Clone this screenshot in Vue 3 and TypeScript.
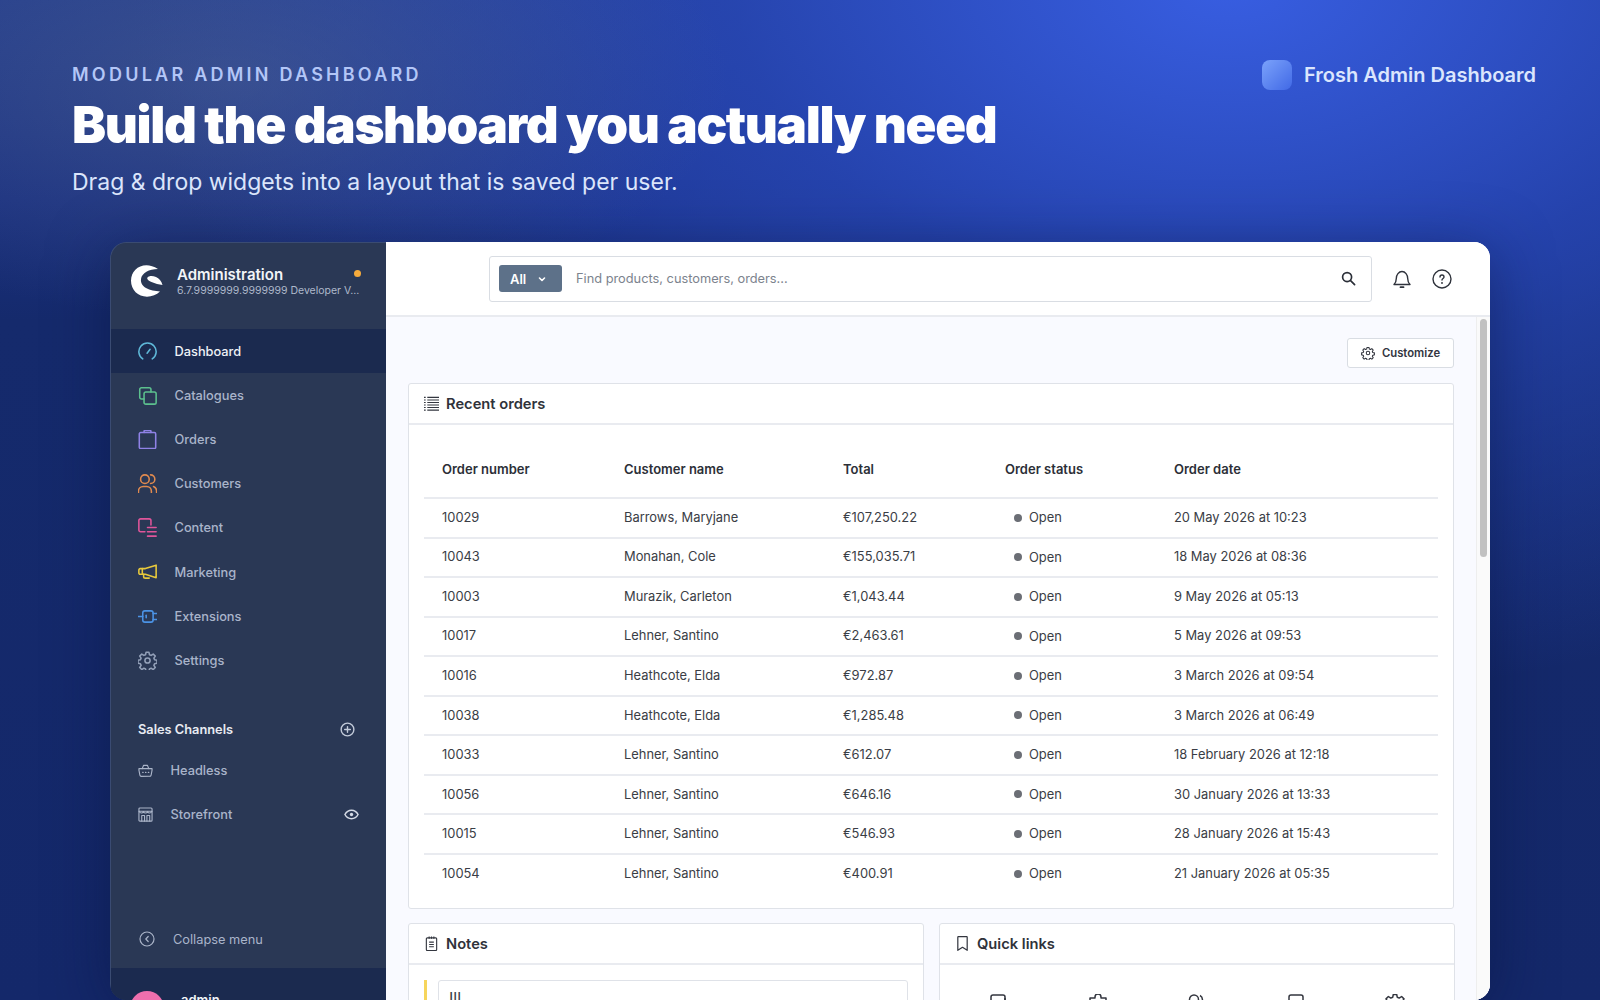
<script setup lang="ts">
interface NavItem {
  label: string;
  color: string;
  paths: string[];
}
interface Order {
  number: string;
  customer: string;
  total: string;
  date: string;
}

const gear =
  "M10.3 2.5h3.400l.6 2.800 1.900.8 2.400-1.600 2.400 2.400-1.600 2.400.8 1.900 2.800.6v3.400l-2.800.6-.8 1.900 1.600 2.400-2.400 2.400-2.400-1.600-1.900.8-.6 2.800h-3.400l-.6-2.800-1.900-.8-2.400 1.600-2.400-2.400 1.600-2.400-.8-1.900-2.800-.6v-3.400l2.800-.6.8-1.900-1.600-2.400 2.400-2.400 2.400 1.600 1.900-.8z";

const navItems: NavItem[] = [
  { label: "Dashboard", color: "#5fb8d8", paths: ["M6.500 20.500a10 10 0 1 1 11 0", "M11.500 14l3.500-4.500"] },
  { label: "Catalogues", color: "#5cc08e", paths: ["M8 16H5a2 2 0 0 1-2-2V5a2 2 0 0 1 2-2h9a2 2 0 0 1 2 2v3", "M10 8h10a2 2 0 0 1 2 2v10a2 2 0 0 1-2 2H10a2 2 0 0 1-2-2V10a2 2 0 0 1 2-2z"] },
  { label: "Orders", color: "#8f82e6", paths: ["M4 4h16a1.500 1.500 0 0 1 1.500 1.500V21a1.500 1.500 0 0 1-1.500 1.500H4A1.500 1.500 0 0 1 2.500 21V5.500A1.500 1.500 0 0 1 4 4z", "M8 4V2.800a1.300 1.300 0 0 1 1.300-1.300h5.400A1.300 1.300 0 0 1 16 2.800V4"] },
  { label: "Customers", color: "#e08a4f", paths: ["M9 12a5 5 0 1 0 0-10 5 5 0 0 0 0 10z", "M1.500 22.500V21a5.500 5.500 0 0 1 5.500-5.500h4a5.500 5.500 0 0 1 5.500 5.500v1.500", "M15.500 2a5 5 0 0 1 0 10", "M19 15.500a5.500 5.500 0 0 1 3.500 5.500v1.500"] },
  { label: "Content", color: "#e0559a", paths: ["M9 17H4a2 2 0 0 1-2-2V4a2 2 0 0 1 2-2h10a2 2 0 0 1 2 2v5", "M12 12h10", "M12 17h10", "M12 22h10"] },
  { label: "Marketing", color: "#e8c93c", paths: ["M22 3.500v14.500L9.500 14H3.500a1.500 1.500 0 0 1-1.500-1.500V9a1.500 1.500 0 0 1 1.500-1.500h6z", "M7.500 14v2.500a2 2 0 0 0 2 2H14", "M6 7.500v6"] },
  { label: "Extensions", color: "#4b93e6", paths: ["M9 5.500h7a2.500 2.500 0 0 1 2.500 2.500v8a2.500 2.500 0 0 1-2.500 2.500H9A2.500 2.500 0 0 1 6.500 16V8A2.500 2.500 0 0 1 9 5.500z", "M1 12h5.500", "M18.500 8.500H23", "M18.500 15.500H23", "M10.500 10.500v3"] },
  { label: "Settings", color: "#93a0b8", paths: ["M12 15a3 3 0 1 0 0-6 3 3 0 0 0 0 6z", gear] },
];

const orders: Order[] = [
  { number: "10029", customer: "Barrows, Maryjane", total: "€107,250.22", date: "20 May 2026 at 10:23" },
  { number: "10043", customer: "Monahan, Cole", total: "€155,035.71", date: "18 May 2026 at 08:36" },
  { number: "10003", customer: "Murazik, Carleton", total: "€1,043.44", date: "9 May 2026 at 05:13" },
  { number: "10017", customer: "Lehner, Santino", total: "€2,463.61", date: "5 May 2026 at 09:53" },
  { number: "10016", customer: "Heathcote, Elda", total: "€972.87", date: "3 March 2026 at 09:54" },
  { number: "10038", customer: "Heathcote, Elda", total: "€1,285.48", date: "3 March 2026 at 06:49" },
  { number: "10033", customer: "Lehner, Santino", total: "€612.07", date: "18 February 2026 at 12:18" },
  { number: "10056", customer: "Lehner, Santino", total: "€646.16", date: "30 January 2026 at 13:33" },
  { number: "10015", customer: "Lehner, Santino", total: "€546.93", date: "28 January 2026 at 15:43" },
  { number: "10054", customer: "Lehner, Santino", total: "€400.91", date: "21 January 2026 at 05:35" },
];

const quickLinks: string[][] = [
  ["M15 21H6a2 2 0 0 1-2-2V5a2 2 0 0 1 2-2h10a2 2 0 0 1 2 2v3", "M18 6v6", "M15 9h7"],
  ["M9 6V5a3 3 0 0 1 6 0v1h5v14H4V6z"],
  ["M9 12a4.500 4.500 0 1 0 0-9 4.500 4.500 0 0 0 0 9z", "M2 21a7 7 0 0 1 14 0", "M15 3.500a4.500 4.500 0 0 1 0 8"],
  ["M7 3h10a2 2 0 0 1 2 2v14a2 2 0 0 1-2 2H7a2 2 0 0 1-2-2V5a2 2 0 0 1 2-2z"],
  [gear],
];
</script>

<template>
  <div class="page">
    <header class="hero">
      <div class="hero-text">
        <div class="eyebrow">MODULAR ADMIN DASHBOARD</div>
        <h1 class="headline">Build the dashboard you actually need</h1>
        <p class="sub">Drag &amp; drop widgets into a layout that is saved per user.</p>
      </div>
      <div class="brand">
        <span class="brand-mark"></span>
        <span class="brand-name">Frosh Admin Dashboard</span>
      </div>
    </header>

    <div class="window">
      <aside class="sidebar">
        <div class="side-head">
          <svg class="logo" viewBox="0 0 32 32">
            <path fill="#fff" d="M27 4C23 1.500 19 .3 15.500.3 6.500.3 0 7 0 15.800 0 25 7 31.700 16 31.700c5 0 9.500-2 13-5.200-5-.5-10-1-14-3.500-3.500-2-5.500-5-5-9C10.800 8 18 4 27 4z" />
            <path fill="#fff" d="M16.500 12.500c1.500-2 5-2 8.500-.5 3 1.300 5.500 4 6.500 8-3.500-.5-7.500-1.500-11-3-3-1.200-5-3-4-4.500z" />
          </svg>
          <div class="side-title">
            <div class="admin">Administration</div>
            <div class="version">6.7.9999999.9999999 Developer V...</div>
          </div>
          <span class="status-dot"></span>
        </div>

        <nav class="nav">
          <a v-for="(item, i) in navItems" :key="item.label" class="nav-item" :class="{ active: i === 0 }">
            <svg class="nav-icon" viewBox="1 1 22 22" fill="none" :stroke="item.color" stroke-width="1.800" stroke-linecap="round" stroke-linejoin="round">
              <path v-for="d in item.paths" :key="d" :d="d" />
            </svg>
            <span>{{ item.label }}</span>
          </a>
        </nav>

        <div class="channels-head">
          <span>Sales Channels</span>
          <svg class="plus" viewBox="0 0 16 16" fill="none" stroke="#c3cbda" stroke-width="1.500" stroke-linecap="round">
            <circle cx="8" cy="8" r="6.800" />
            <path d="M8 5v6M5 8h6" />
          </svg>
        </div>
        <a class="channel">
          <svg class="channel-icon" viewBox="0 0 16 16" fill="none" stroke="#aab4c8" stroke-width="1.200" stroke-linecap="round" stroke-linejoin="round">
            <path d="M1 6h14v1.500l-1 5.500a1.500 1.500 0 0 1-1.500 1.200h-9A1.500 1.500 0 0 1 2 13L1 7.500z" />
            <path d="M4.500 6l1.500-3.500h4L11.500 6M5 10h.5M8 10h.5M11 10h.5" />
          </svg>
          <span>Headless</span>
        </a>
        <a class="channel">
          <svg class="channel-icon" viewBox="0 0 16 16" fill="none" stroke="#aab4c8" stroke-width="1.200" stroke-linecap="round" stroke-linejoin="round">
            <path d="M2 1h12a1 1 0 0 1 1 1v12a1 1 0 0 1-1 1H2a1 1 0 0 1-1-1V2a1 1 0 0 1 1-1z" />
            <path d="M1 4.500h14M1.500 5c.5 1.800 3.500 1.800 4.300 0 .8 1.800 3.600 1.800 4.400 0 .8 1.800 3.800 1.800 4.300 0M4 15V9h3v6M9.500 15V9h3v6" />
          </svg>
          <span>Storefront</span>
          <svg class="eye" viewBox="0 0 16 16" fill="none" stroke="#d5dbe6" stroke-width="1.600">
            <path d="M1 8c1.600-3 4-4.500 7-4.500S13.400 5 15 8c-1.600 3-4 4.500-7 4.500S2.600 11 1 8z" />
            <circle cx="8" cy="8" r="1.800" fill="#d5dbe6" stroke="none" />
          </svg>
        </a>

        <div class="side-foot">
          <a class="collapse">
            <svg class="collapse-icon" viewBox="0 0 16 16" fill="none" stroke="#aab4c8" stroke-width="1.200" stroke-linecap="round" stroke-linejoin="round">
              <circle cx="8" cy="8" r="7" />
              <path d="M9.200 5.500 6.800 8l2.400 2.500" />
            </svg>
            <span>Collapse menu</span>
          </a>
          <div class="user">
            <span class="avatar"></span>
            <span class="user-name">admin</span>
          </div>
        </div>
      </aside>

      <main class="main">
        <div class="topbar">
          <div class="search">
            <span class="scope">All
              <svg viewBox="0 0 10 10" fill="none" stroke="#fff" stroke-width="1.600" stroke-linecap="round" stroke-linejoin="round">
                <path d="M2.500 4l2.500 2.500L7.500 4" />
              </svg>
            </span>
            <span class="placeholder">Find products, customers, orders...</span>
            <svg class="search-icon" viewBox="0 0 16 16" fill="none" stroke="#2b2f38" stroke-width="1.800" stroke-linecap="round">
              <circle cx="6.500" cy="6.500" r="4.800" />
              <path d="M10.200 10.200 14.500 14.500" />
            </svg>
          </div>
          <svg class="bar-icon" viewBox="0 0 20 20" fill="none" stroke="#2f333c" stroke-width="1.400" stroke-linecap="round" stroke-linejoin="round">
            <path d="M2 15.500h16c-1.500-1.500-2.300-2.500-2.300-6 0-3.800-2.500-7-5.700-7s-5.700 3.200-5.700 7c0 3.500-.8 4.500-2.300 6z" />
            <path d="M8.500 18.200h3" stroke-width="1.800" />
          </svg>
          <svg class="bar-icon help" viewBox="0 0 20 20" fill="none" stroke="#2f333c" stroke-width="1.400" stroke-linecap="round" stroke-linejoin="round">
            <circle cx="10" cy="10" r="9" />
            <path d="M8 8c0-1.200 1-2 2-2s2 .8 2 2c0 1.400-2 1.500-2 3" />
            <path d="M10 13.800v.2" stroke-width="1.800" />
          </svg>
        </div>

        <div class="content">
          <div class="scroll">
            <div class="toolbar">
              <button class="customize">
                <svg viewBox="0 0 24 24" fill="none" stroke="#33363f" stroke-width="1.800" stroke-linejoin="round">
                  <path d="M12 15a3 3 0 1 0 0-6 3 3 0 0 0 0 6z" />
                  <path :d="gear" />
                </svg>
                Customize
              </button>
            </div>

            <section class="card">
              <div class="card-head">
                <svg class="card-icon" viewBox="0 0 16 16" fill="none" stroke="#33363f" stroke-width="1.200">
                  <path d="M3.500 1.500H16M3.500 4.200H16M3.500 6.900H16M3.500 9.600H16M3.500 12.300H16M3.500 15H16" />
                  <path d="M0 1.500h1.800M0 4.200h1.800M0 6.900h1.800M0 9.600h1.800M0 12.300h1.800M0 15h1.800" />
                </svg>
                <span>Recent orders</span>
              </div>
              <div class="table-wrap">
                <table class="orders">
                  <colgroup>
                    <col class="c-num" />
                    <col class="c-name" />
                    <col class="c-total" />
                    <col class="c-status" />
                    <col />
                  </colgroup>
                  <thead>
                    <tr>
                      <th>Order number</th>
                      <th>Customer name</th>
                      <th>Total</th>
                      <th>Order status</th>
                      <th>Order date</th>
                    </tr>
                  </thead>
                  <tbody>
                    <tr v-for="order in orders" :key="order.number">
                      <td>{{ order.number }}</td>
                      <td>{{ order.customer }}</td>
                      <td>{{ order.total }}</td>
                      <td><span class="state"><i></i>Open</span></td>
                      <td>{{ order.date }}</td>
                    </tr>
                  </tbody>
                </table>
              </div>
            </section>

            <div class="lower">
              <section class="card">
                <div class="card-head">
                  <svg class="card-icon" viewBox="0 0 16 16" fill="none" stroke="#33363f" stroke-width="1.200" stroke-linejoin="round">
                    <path d="M3.500 2h9a1 1 0 0 1 1 1v11.500a1 1 0 0 1-1 1h-9a1 1 0 0 1-1-1V3a1 1 0 0 1 1-1z" />
                    <path d="M5.500 .5V3M8 .5V3M10.500 .5V3M5.500 6.500h5M5.500 9h5M5.500 11.500h5" />
                  </svg>
                  <span>Notes</span>
                </div>
                <div class="notes-body">
                  <div class="note">
                    <div class="note-box">Ill</div>
                  </div>
                </div>
              </section>
              <section class="card">
                <div class="card-head">
                  <svg class="card-icon" viewBox="0 0 16 16" fill="none" stroke="#33363f" stroke-width="1.300" stroke-linejoin="round">
                    <path d="M3.500 .7h9a.5.5 0 0 1 .5.5v14.100L8 12l-5 3.300V1.200a.5.5 0 0 1 .5-.5z" />
                  </svg>
                  <span>Quick links</span>
                </div>
                <div class="links-body">
                  <svg v-for="(link, i) in quickLinks" :key="i" class="link-icon" viewBox="2 2 20 20" fill="none" stroke="#33363f" stroke-width="1.500" stroke-linejoin="round">
                    <path v-for="d in link" :key="d" :d="d" />
                  </svg>
                </div>
              </section>
            </div>
          </div>
          <div class="track"><div class="thumb"></div></div>
        </div>
      </main>
    </div>
  </div>
</template>

<style scoped>
.page {
  width: 1600px;
  height: 1000px;
  overflow: hidden;
  font-family: Inter, "Noto Sans", sans-serif;
  background:
    radial-gradient(500px 240px at 230px 80px, rgba(90, 110, 150, 0.42), rgba(90, 110, 150, 0) 100%),
    radial-gradient(1100px 720px at 1230px -20px, rgb(56, 94, 226) 0%, rgba(40, 72, 185, 0.78) 45%, rgba(30, 55, 150, 0) 100%),
    linear-gradient(180deg, #233c8c 0%, #1a3080 20%, #152a6c 32%, #14286a 100%);
}

.hero {
  height: 242px;
  padding: 63px 64px 0 72px;
  box-sizing: border-box;
  display: flex;
  justify-content: space-between;
  align-items: flex-start;
}

.eyebrow {
  font-size: 18px;
  line-height: 24px;
  font-weight: 600;
  letter-spacing: 0.18em;
  color: #b3c6f7;
}

.headline {
  margin: 7px 0 0;
  font-size: 51px;
  line-height: 62px;
  font-weight: 900;
  letter-spacing: -0.0265em;
  color: #fff;
}

.sub {
  margin: 11px 0 0;
  font-size: 23px;
  line-height: 30px;
  color: #dbe5fb;
}

.brand {
  display: flex;
  align-items: center;
  gap: 12px;
  margin-top: -3px;
}

.brand-mark {
  width: 30px;
  height: 30px;
  border-radius: 8px;
  background: linear-gradient(135deg, #7ba2fb, #4169e6);
}

.brand-name {
  font-size: 20px;
  font-weight: 600;
  color: #dbe6fd;
}

.window {
  width: 1380px;
  height: 758px;
  margin-left: 110px;
  display: flex;
  border-radius: 16px;
  overflow: hidden;
  box-shadow: 0 10px 60px rgba(8, 18, 60, 0.5);
}

.sidebar {
  width: 276px;
  flex: none;
  display: flex;
  flex-direction: column;
  background: #2a3855;
  box-sizing: border-box;
  border-left: 1px solid #3a4b72;
  border-top: 1px solid #3a4b72;
  border-top-left-radius: 16px;
  border-bottom-left-radius: 16px;
}

.side-head {
  height: 86px;
  display: flex;
  align-items: flex-start;
  padding: 22px 0 0 20px;
  box-sizing: border-box;
  position: relative;
}

.logo {
  width: 32px;
  height: 32px;
  flex: none;
}

.side-title {
  margin-left: 14px;
  width: 186px;
  padding-top: 1px;
}

.admin {
  font-size: 15px;
  line-height: 18px;
  font-weight: 600;
  color: #f2f4f8;
}

.version {
  font-size: 10.500px;
  line-height: 13px;
  color: #aeb8cb;
  white-space: nowrap;
}

.status-dot {
  position: absolute;
  left: 243px;
  top: 27px;
  width: 7px;
  height: 7px;
  border-radius: 50%;
  background: #f6ab3c;
}

.nav-item {
  height: 44.200px;
  display: flex;
  align-items: center;
  gap: 17.500px;
  padding-left: 27px;
  font-size: 12.800px;
  font-weight: 500;
  color: #a9b4ca;
}

.nav-item.active {
  background: #1b2a4f;
  color: #eef1f6;
}

.nav-icon {
  width: 19px;
  height: 19px;
  flex: none;
}

.channels-head {
  margin-top: 36px;
  height: 22px;
  padding: 0 31px 0 27px;
  display: flex;
  justify-content: space-between;
  align-items: center;
  font-size: 12.800px;
  font-weight: 600;
  color: #e8ebf2;
}

.plus {
  width: 15px;
  height: 15px;
}

.channel {
  height: 44.200px;
  display: flex;
  align-items: center;
  gap: 17.500px;
  padding-left: 27px;
  font-size: 12.800px;
  font-weight: 500;
  color: #a9b4ca;
}

.channel:first-of-type {
  margin-top: 8px;
}

.channel-icon {
  width: 15px;
  height: 15px;
  flex: none;
}

.eye {
  width: 15px;
  height: 15px;
  margin-left: auto;
  margin-right: 27px;
}

.side-foot {
  margin-top: auto;
}

.collapse {
  height: 44px;
  display: flex;
  align-items: center;
  gap: 18px;
  padding-left: 28px;
  margin-bottom: 7px;
  font-size: 12.800px;
  color: #a9b4ca;
}

.collapse-icon {
  width: 16px;
  height: 16px;
}

.user {
  height: 32px;
  overflow: hidden;
  background: #1b2a4f;
  display: flex;
  gap: 17px;
  padding: 23px 0 0 19px;
  box-sizing: border-box;
}

.avatar {
  width: 34px;
  height: 34px;
  flex: none;
  border-radius: 50%;
  background: #ee6fae;
}

.user-name {
  font-size: 13px;
  line-height: 17px;
  font-weight: 600;
  margin-top: 1px;
  color: #f2f4f8;
}

.main {
  flex: 1;
  min-width: 0;
  display: flex;
  flex-direction: column;
  background: #fff;
}

.topbar {
  height: 75px;
  flex: none;
  box-sizing: border-box;
  border-bottom: 2px solid #e9ebf0;
  display: flex;
  align-items: center;
  padding: 0 36px 0 103px;
  background: #fff;
}

.search {
  width: 883px;
  height: 46px;
  box-sizing: border-box;
  border: 1px solid #d9dde3;
  border-radius: 3px;
  display: flex;
  align-items: center;
  padding: 0 15px 0 9px;
}

.scope {
  width: 63px;
  height: 27px;
  box-sizing: border-box;
  padding-left: 11px;
  border-radius: 3px;
  background: #5d7189;
  color: #fff;
  font-size: 13px;
  font-weight: 600;
  display: flex;
  align-items: center;
  gap: 11px;
}

.scope svg {
  width: 10px;
  height: 10px;
}

.placeholder {
  margin-left: 14px;
  font-size: 12.800px;
  color: #7c838e;
}

.search-icon {
  width: 15px;
  height: 15px;
  margin-left: auto;
}

.bar-icon {
  width: 20px;
  height: 20px;
  margin-left: 20px;
}

.bar-icon.help {
  margin-left: 20px;
}

.content {
  flex: 1;
  min-height: 0;
  display: flex;
  background: #f9faff;
}

.scroll {
  flex: 1;
  min-width: 0;
  padding: 21px 22px 0 22px;
  overflow: hidden;
}

.track {
  width: 14px;
  flex: none;
  background: #fafafa;
  border-left: 1px solid #eee;
  box-sizing: border-box;
  padding: 2px 3px 0 3px;
}

.thumb {
  height: 238px;
  border-radius: 4px;
  background: #c1c1c1;
}

.toolbar {
  display: flex;
  justify-content: flex-end;
  margin-bottom: 15px;
}

.customize {
  width: 107px;
  height: 30px;
  box-sizing: border-box;
  display: flex;
  align-items: center;
  justify-content: center;
  gap: 7px;
  background: #fff;
  border: 1px solid #d9dde3;
  border-radius: 3px;
  font-family: inherit;
  font-size: 11.300px;
  font-weight: 600;
  color: #33363f;
  padding: 0;
}

.customize svg {
  width: 14px;
  height: 14px;
}

.card {
  background: #fff;
  border: 1px solid #dfe2e8;
  border-radius: 3px;
  box-sizing: border-box;
}

.card-head {
  height: 39px;
  border-bottom: 2px solid #e9ebf0;
  display: flex;
  align-items: center;
  gap: 7px;
  padding-left: 15px;
  font-size: 14.700px;
  font-weight: 600;
  color: #2f323a;
}

.card-icon {
  width: 15px;
  height: 15px;
  flex: none;
}

.table-wrap {
  padding: 16px 15px 15px;
}

.orders {
  width: 100%;
  border-collapse: collapse;
  table-layout: fixed;
  font-size: 12.900px;
  color: #3a3d45;
}

.c-num {
  width: 182px;
}

.c-name {
  width: 219px;
}

.c-total {
  width: 162px;
}

.c-status {
  width: 169px;
}

.orders th {
  height: 56px;
  text-align: left;
  font-size: 13px;
  font-weight: 600;
  color: #2c2f37;
  padding: 0 0 0 18px;
  border-bottom: 2px solid #e9ebf0;
}

.orders td {
  height: 39.550px;
  box-sizing: border-box;
  padding: 0 0 1px 18px;
  border-bottom: 2px solid #e9ebf0;
}

.orders tbody tr:last-child td {
  border-bottom: none;
}

.state {
  display: inline-flex;
  align-items: center;
  gap: 7px;
  margin-left: 9px;
}

.state i {
  width: 8px;
  height: 8px;
  border-radius: 50%;
  background: #6b6e75;
}

.lower {
  display: grid;
  grid-template-columns: 516px 516px;
  gap: 15px;
  margin-top: 14px;
}

.notes-body {
  padding: 15px 15px 0;
}

.note {
  border-left: 3px solid #f6d55c;
  padding-left: 11px;
}

.note-box {
  height: 60px;
  border: 1px solid #dfe2e8;
  border-radius: 3px;
  padding: 7px 10px;
  font-size: 16px;
  color: #3a3d45;
}

.links-body {
  display: grid;
  grid-template-columns: repeat(5, 1fr);
  justify-items: center;
  padding: 29px 10px 0;
}

.link-icon {
  width: 20px;
  height: 20px;
}
</style>

<style>
html,
body {
  margin: 0;
  background: #14286a;
}
</style>
